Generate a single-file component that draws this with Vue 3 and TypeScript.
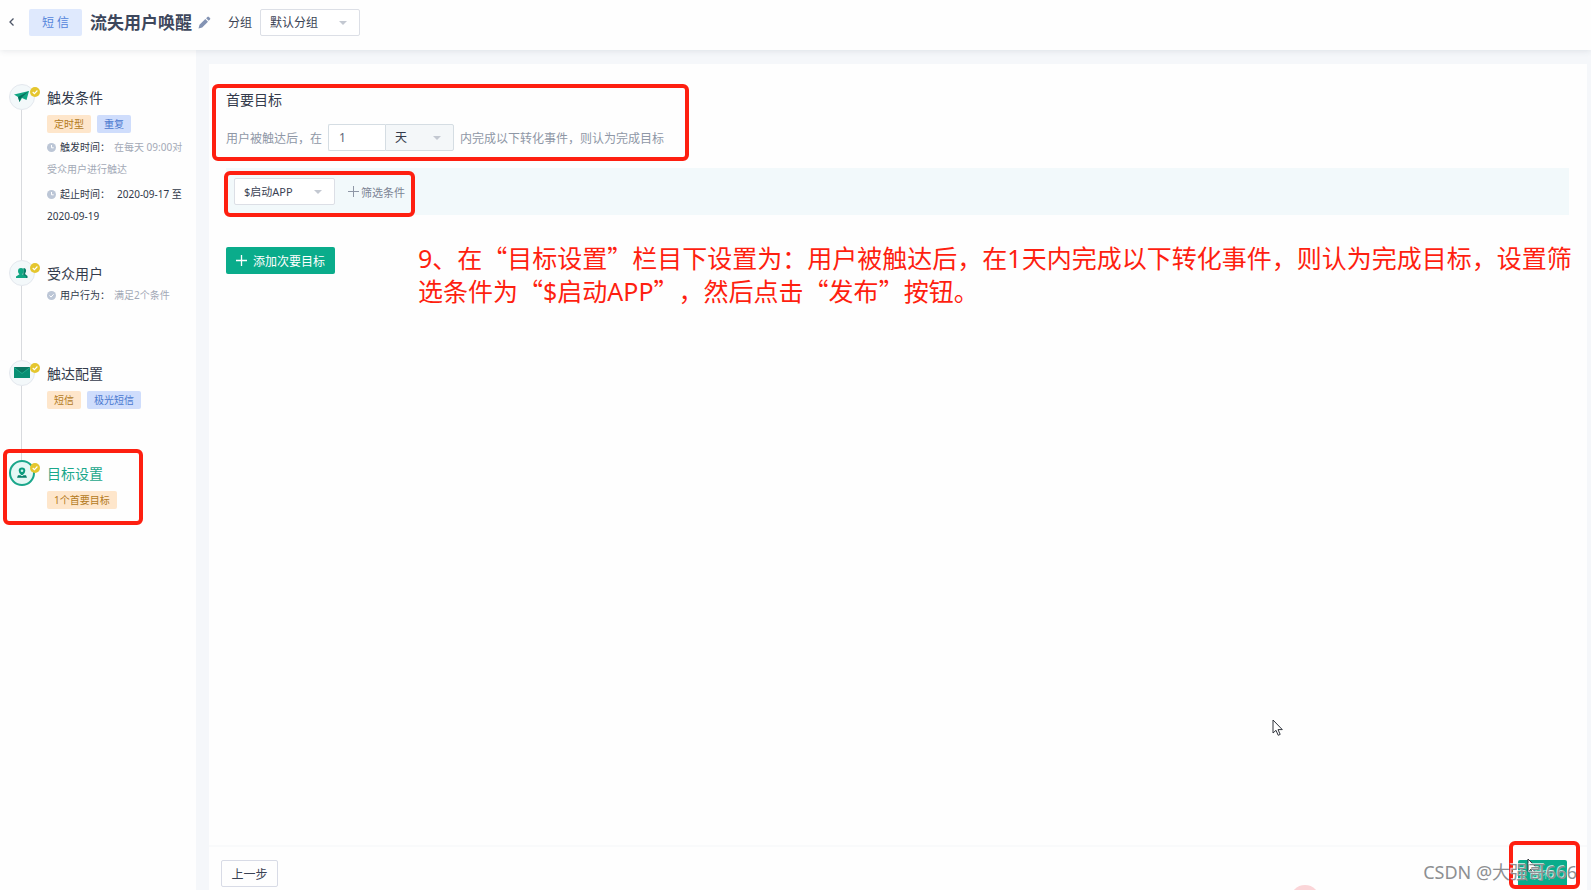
<script setup lang="ts">
import { ref } from 'vue'

interface Tag {
  text: string
  tone: 'orange' | 'blue'
}
interface Detail {
  icon: 'clock' | 'check'
  label: string
  value: string
  dark?: boolean
}
interface Step {
  icon: 'plane' | 'users' | 'mail' | 'goal'
  title: string
  tags: Tag[]
  details: Detail[]
  active?: boolean
}

const steps: Step[] = [
  {
    icon: 'plane',
    title: '触发条件',
    tags: [
      { text: '定时型', tone: 'orange' },
      { text: '重复', tone: 'blue' },
    ],
    details: [
      { icon: 'clock', label: '触发时间：', value: '在每天 09:00对受众用户进行触达' },
      { icon: 'clock', label: '起止时间：', value: '2020-09-17 至 2020-09-19', dark: true },
    ],
  },
  {
    icon: 'users',
    title: '受众用户',
    tags: [],
    details: [{ icon: 'check', label: '用户行为：', value: '满足2个条件' }],
  },
  {
    icon: 'mail',
    title: '触达配置',
    tags: [
      { text: '短信', tone: 'orange' },
      { text: '极光短信', tone: 'blue' },
    ],
    details: [],
  },
  {
    icon: 'goal',
    title: '目标设置',
    tags: [{ text: '1个首要目标', tone: 'orange' }],
    details: [],
    active: true,
  },
]

const group = ref('默认分组')
const amount = ref('1')
const unit = ref('天')
const event = ref('$启动APP')
</script>

<template>
  <div class="page">
    <header class="topbar">
      <button class="back" type="button" aria-label="返回">
        <svg width="8" height="10" viewBox="0 0 8 10"><path d="M5.5 1.5 2 5l3.500 3.500" fill="none" stroke="#4d5566" stroke-width="1.300" /></svg>
      </button>
      <span class="channel">短 信</span>
      <h1>流失用户唤醒</h1>
      <button class="edit" type="button" aria-label="编辑名称">
        <svg width="13" height="13" viewBox="0 0 13 13">
          <path d="M.5 12.500l1-3.800L7.300 3l2.700 2.700-5.800 5.800zM8.100 2.200l1.300-1.300q.7-.6 1.400 0l1.200 1.200q.7.7 0 1.400l-1.300 1.300z" fill="#8393b3" />
        </svg>
      </button>
      <label class="group-label" for="group">分组</label>
      <span class="select group-select">
        <select id="group" v-model="group"><option>默认分组</option></select>
      </span>
    </header>

    <div class="body">
      <nav class="steps">
        <section v-for="step in steps" :key="step.title" class="step" :class="[step.icon, { active: step.active }]">
          <div class="node">
            <svg v-if="step.icon === 'plane'" width="16" height="14" viewBox="0 0 16 14">
              <path d="M0 4.500 15 1l-2.500 9-4.500-2-2.500 4L4 7z" fill="#11a683" />
              <path d="M4 7 15 1 7 8l-1.500 4z" fill="#08705d" />
            </svg>
            <svg v-else-if="step.icon === 'users'" width="12" height="12" viewBox="0 0 12 12">
              <path d="M7.500 1q3 0 2.500 3.500L9 7l2.500 2v2H7z" fill="#0b7f69" />
              <path d="M5 1q3 0 2.700 3.200Q7.500 6 6.300 7.200L10 9.500V11H0V9.500l3.500-2.300Q2 6 2 4.200 2 1 5 1z" fill="#11a683" />
            </svg>
            <svg v-else-if="step.icon === 'mail'" width="16" height="11" viewBox="0 0 16 11">
              <path d="M0 0h16v11H0z" fill="#078f73" />
              <path d="M0 0h16L8 6z" fill="#0a7762" />
              <path d="m0 .5 8 6 8-6" fill="none" stroke="#2bb597" stroke-width=".7" />
            </svg>
            <svg v-else width="12" height="12" viewBox="0 0 12 12">
              <path d="M6 .5a3.300 3.300 0 0 1 3.300 3.300Q9.300 6 6.800 8H5.200Q2.700 6 2.700 3.800A3.300 3.300 0 0 1 6 .5z" fill="#0b9b7d" />
              <path d="M2 8.200h2.500L6 9.300l1.500-1.100H10l1 2.600H1z" fill="#08806a" />
              <circle cx="6" cy="3.800" r="1.300" fill="#c9f3ea" />
            </svg>
            <svg class="done" width="10" height="10" viewBox="0 0 10 10">
              <circle cx="5" cy="5" r="5" fill="#e5c62e" />
              <path d="m2.700 5 1.700 1.700 3-3.200" fill="none" stroke="#fff" stroke-width="1.100" />
            </svg>
          </div>
          <div class="info">
            <h2>{{ step.title }}</h2>
            <div v-if="step.tags.length" class="tags">
              <span v-for="tag in step.tags" :key="tag.text" class="tag" :class="tag.tone">{{ tag.text }}</span>
            </div>
            <p v-for="detail in step.details" :key="detail.label">
              <svg width="9" height="9" viewBox="0 0 9 9">
                <circle cx="4.500" cy="4.500" r="4.500" fill="#bcc6d6" />
                <path :d="detail.icon === 'clock' ? 'M4.500 2v2.800h2.200' : 'm2.500 4.500 1.500 1.600 2.600-2.800'" fill="none" stroke="#fff" />
              </svg>
              <span class="detail-label">{{ detail.label }}</span>
              <span class="detail-value" :class="{ dark: detail.dark }">{{ detail.value }}</span>
            </p>
          </div>
        </section>
      </nav>

      <main class="panel">
        <div class="content">
          <section class="goal-block">
            <h3>首要目标</h3>
            <div class="sentence">
              <label for="amount">用户被触达后，在</label>
              <span class="period">
                <input id="amount" v-model="amount" type="text" />
                <span class="select unit-select">
                  <select v-model="unit" aria-label="时间单位"><option>天</option></select>
                </span>
              </span>
              <span>内完成以下转化事件，则认为完成目标</span>
            </div>
          </section>

          <div class="event-row">
            <span class="select event-select">
              <select v-model="event" aria-label="转化事件"><option>$启动APP</option></select>
            </span>
            <button class="filter" type="button">
              <svg width="11" height="11" viewBox="0 0 11 11"><path d="M5.500 0v11M0 5.500h11" stroke="#8f97a6" /></svg>
              筛选条件
            </button>
          </div>

          <div class="secondary">
            <button class="add" type="button">
              <svg width="11" height="11" viewBox="0 0 11 11"><path d="M5.500 0v11M0 5.500h11" stroke="#fff" stroke-width="1.300" /></svg>
              添加次要目标
            </button>
            <p class="note">9、在<q>目标设置</q>栏目下设置为：用户被触达后，在1天内完成以下转化事件，则认为完成目标，设置筛选条件为<q>$启动APP</q>，然后点击<q>发布</q>按钮。</p>
          </div>
        </div>

        <footer>
          <button class="prev" type="button">上一步</button>
          <button class="publish" type="button">发布</button>
        </footer>
      </main>
    </div>

    <div class="mark mark-goal"></div>
    <div class="mark mark-event"></div>
    <div class="mark mark-step"></div>
    <div class="mark mark-publish"></div>
    <div class="ripple"></div>
    <svg class="cursor cursor-main" width="12" height="18" viewBox="0 0 12 18"><path d="M1 1v13l3-2.700 2.200 5 2-.9L6 10.600h4.300z" fill="#fff" stroke="#30343c" /></svg>
    <svg class="cursor cursor-publish" width="12" height="18" viewBox="0 0 12 18"><path d="M1 1v13l3-2.700 2.200 5 2-.9L6 10.600h4.300z" fill="#fff" stroke="#30343c" /></svg>
    <div class="watermark">CSDN @大强哥666</div>
  </div>
</template>

<style>
body {
  margin: 0;
}
</style>

<style scoped>
*, *::before {
  box-sizing: border-box;
}
.page {
  position: relative;
  display: flex;
  flex-direction: column;
  min-height: 100vh;
  overflow: hidden;
  background: #f5f7fa;
  color: #3a4254;
  font-family: "Noto Sans", "Noto Sans CJK SC", sans-serif;
  font-size: 12px;
}
h1, h2, h3, p {
  margin: 0;
  font-weight: 400;
}
svg {
  display: block;
  flex: none;
}
button, input, select {
  margin: 0;
  padding: 0;
  border: 0;
  background: none;
  color: inherit;
  font: inherit;
}
.topbar {
  position: relative;
  display: flex;
  align-items: center;
  height: 50px;
  padding: 0 8px 6px;
  background: #fefefe;
  box-shadow: 0 1px 6px rgba(60, 70, 90, 0.12);
}
.back {
  width: 21px;
}
.channel {
  width: 53px;
  border-radius: 2px;
  background: #dfe9fd;
  color: #5585db;
  line-height: 27px;
  text-align: center;
}
h1 {
  margin-left: 8px;
  color: #3d475c;
  font-size: 17px;
  font-weight: 700;
  line-height: 27px;
}
.edit {
  margin: 0 17px 0 6px;
}
.select {
  position: relative;
  display: block;
  height: 27px;
  border: 1px solid #dcdfe6;
  border-radius: 2px;
  background: #fff;
}
.select::after {
  position: absolute;
  top: 11px;
  right: 12px;
  border: 4px solid transparent;
  border-top-color: #c3c8d1;
  border-bottom: 0;
  content: "";
  pointer-events: none;
}
.select select {
  width: 100%;
  height: 100%;
  padding: 0 24px 0 9px;
  appearance: none;
}
.group-select {
  width: 100px;
  margin-left: 8px;
}
.body {
  display: flex;
  flex: 1;
}
.steps {
  width: 196px;
  padding: 34px 12px 0 9px;
  background: #fefefe;
}
.step {
  display: flex;
  gap: 12px;
  min-height: 100px;
}
.step.plane {
  min-height: 176px;
}
.node {
  position: relative;
  display: flex;
  flex: none;
  align-items: flex-start;
  justify-content: center;
  width: 26px;
}
.node::before {
  position: absolute;
  inset: 0 0 auto;
  height: 26px;
  border: 1px solid #e4e8ee;
  border-radius: 50%;
  background: #f3f8fa;
  content: "";
}
.node > svg {
  position: relative;
  margin-top: 7px;
}
.plane .node > svg {
  margin-top: 6px;
}
.node > .done, .plane .node > .done {
  position: absolute;
  top: 3px;
  right: -5px;
  margin: 0;
}
.step:not(:last-child) .node::after {
  position: absolute;
  top: 26px;
  bottom: 0;
  left: 12px;
  width: 1px;
  background: #d8dade;
  content: "";
}
.active .node::before {
  border: 2px solid #1ba78b;
  background: #e6f8f5;
}
.info {
  flex: 1;
  font-size: 10px;
}
h2 {
  padding-top: 4px;
  color: #343b4c;
  font-size: 14px;
  line-height: 20px;
}
.active h2 {
  color: #1ba78b;
}
.tags {
  display: flex;
  gap: 6px;
  margin-top: 7px;
}
.tag {
  padding: 0 7px;
  border-radius: 2px;
  line-height: 18px;
}
.orange {
  background: #fee6cb;
  color: #b37a1d;
}
.blue {
  background: #cfddfc;
  color: #4a78cf;
}
.info p {
  margin-top: 3px;
  line-height: 22px;
}
.info p svg {
  display: inline-block;
  margin-right: 4px;
  vertical-align: -1px;
}
.users .info p {
  margin-top: 0;
}
.detail-label {
  margin-right: 4px;
}
.detail-label, .dark {
  color: #303849;
}
.dark {
  margin-left: 3px;
}
.detail-value:not(.dark) {
  color: #a3a9b6;
}
.panel {
  display: flex;
  flex: 1;
  flex-direction: column;
  margin: 14px 4px 0 13px;
  background: #fefefe;
}
.content {
  flex: 1;
  padding: 25px 18px 0 17px;
}
h3 {
  color: #343b4c;
  font-size: 14px;
  line-height: 22px;
}
.sentence {
  display: flex;
  align-items: center;
  gap: 6px;
  margin-top: 13px;
  color: #8f97a6;
}
.period {
  display: flex;
}
.period input {
  width: 57px;
  height: 27px;
  padding: 0 10px;
  border: 1px solid #d5dde3;
  border-right: 0;
  border-radius: 2px 0 0 2px;
  background: #fff;
  color: #5f6778;
}
.unit-select {
  width: 69px;
  border-color: #d5dde3;
  border-radius: 0 2px 2px 0;
  background: #f4f7f9;
  color: #343b4c;
}
.event-row {
  display: flex;
  align-items: center;
  gap: 13px;
  height: 47px;
  margin-top: 17px;
  padding: 0 8px;
  background: #f2f9fb;
  font-size: 11px;
}
.event-select {
  width: 101px;
}
.filter {
  display: flex;
  align-items: center;
  gap: 2px;
  color: #7c8494;
}
.secondary {
  display: flex;
  align-items: flex-start;
  gap: 83px;
  margin-top: 26px;
}
.add {
  display: flex;
  flex: none;
  align-items: center;
  justify-content: center;
  gap: 6px;
  width: 109px;
  height: 27px;
  margin-top: 6px;
  border-radius: 2px;
  background: #0aac8b;
  color: #fff;
}
.note {
  margin-right: -8px;
  color: #fe1f10;
  font-size: 25px;
  line-height: 32px;
  text-spacing-trim: space-all;
}
.note q {
  quotes: "“" "”";
}
.note q::before, .note q::after {
  font-family: "Noto Sans CJK SC", sans-serif;
}
footer {
  display: flex;
  align-items: center;
  justify-content: space-between;
  height: 45px;
  padding: 10px 20px 0 12px;
  border-top: 2px solid #f9fafb;
}
.prev {
  width: 57px;
  height: 27px;
  border: 1px solid #d8dbe6;
  border-radius: 2px;
}
.publish {
  width: 49px;
  height: 27px;
  border-radius: 2px;
  background: #0aac8b;
  color: rgba(255, 255, 255, 0.45);
}
/* Callouts laid over the page */
.mark {
  position: absolute;
  border: 4px solid #fe1f10;
  border-radius: 6px;
  pointer-events: none;
}
.mark-goal {
  top: 84px;
  left: 212px;
  width: 477px;
  height: 77px;
}
.mark-event {
  top: 171px;
  left: 224px;
  width: 191px;
  height: 46px;
}
.mark-step {
  top: 449px;
  left: 3px;
  width: 140px;
  height: 76px;
}
.mark-publish {
  right: 11px;
  bottom: 1px;
  width: 71px;
  height: 48px;
}
.ripple {
  position: absolute;
  right: 271px;
  bottom: -25px;
  width: 30px;
  height: 30px;
  border-radius: 50%;
  background: #fbd5d8;
}
.cursor {
  position: absolute;
  pointer-events: none;
}
.cursor-main {
  right: 307px;
  bottom: 153px;
}
.cursor-publish {
  right: 52px;
  bottom: 14px;
}
.watermark {
  position: absolute;
  right: 14px;
  bottom: 6px;
  color: #8d8f92;
  font-size: 18px;
  line-height: 24px;
  text-shadow: -1px -1px 0 rgba(255, 255, 255, 0.7);
}
</style>
